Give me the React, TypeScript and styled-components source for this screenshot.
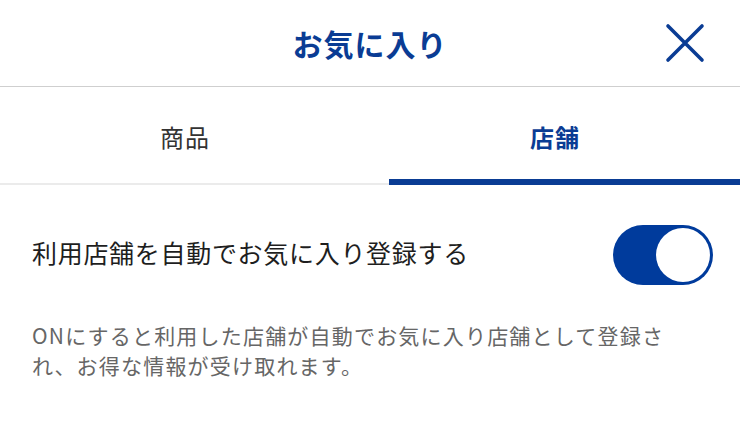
import React, { useState } from "react";
import styled, { createGlobalStyle } from "styled-components";

const blue = "#0a3c94";

const GlobalStyle = createGlobalStyle`
  body {
    margin: 0;
    background: #fff;
    font-family: "Noto Sans CJK JP", "Noto Sans", sans-serif;
  }
`;

const Page = styled.div`
  width: 740px;
  height: 425px;
  overflow: hidden;
  background: #fff;
`;

const Header = styled.header`
  display: grid;
  grid-template-columns: 1fr auto 1fr;
  align-items: center;
  height: 86px;
  border-bottom: 1px solid #cfcfcf;
`;

const Title = styled.h1`
  grid-column: 2;
  margin: 0;
  font-size: 30px;
  font-weight: 700;
  letter-spacing: 1px;
  color: ${blue};
  line-height: 1;
`;

const CloseButton = styled.button`
  grid-column: 3;
  justify-self: end;
  margin-right: 34px;
  padding: 0;
  width: 42px;
  height: 42px;
  border: none;
  background: none;
  display: flex;
  align-items: center;
  justify-content: center;
  cursor: pointer;
`;

const Tabs = styled.nav`
  display: grid;
  grid-template-columns: 389px 1fr;
`;

const Tab = styled.button<{ $active?: boolean }>`
  box-sizing: border-box;
  height: 98px;
  padding: 32px 19px 0 0;
  border: none;
  border-bottom: ${(p) => (p.$active ? `6px solid ${blue}` : "2px solid #ebebeb")};
  background: none;
  font-family: inherit;
  font-size: 24px;
  line-height: 36px;
  letter-spacing: 1px;
  font-weight: ${(p) => (p.$active ? 700 : 400)};
  color: ${(p) => (p.$active ? blue : "#333")};
  display: flex;
  justify-content: center;
  align-items: flex-start;
  cursor: pointer;
`;

const SettingRow = styled.div`
  display: flex;
  align-items: center;
  justify-content: space-between;
  padding: 40px 27px 0 32px;
`;

const SettingLabel = styled.span`
  font-size: 25px;
  letter-spacing: 0.7px;
  color: #1e1e1e;
  line-height: 36px;
  margin-top: -6px;
`;

const Switch = styled.button<{ $on: boolean }>`
  box-sizing: border-box;
  width: 100px;
  height: 60px;
  border-radius: 30px;
  border: none;
  padding: 3px;
  background: ${(p) => (p.$on ? "#003b9c" : "#ccc")};
  display: flex;
  justify-content: ${(p) => (p.$on ? "flex-end" : "flex-start")};
  align-items: center;
  cursor: pointer;
`;

const Knob = styled.span`
  width: 54px;
  height: 54px;
  border-radius: 50%;
  background: #fff;
`;

const Description = styled.p`
  margin: 35px 0 0;
  padding: 0 60px 0 32px;
  font-size: 21px;
  letter-spacing: 1.2px;
  line-height: 30px;
  color: #666;
`;

export default function App() {
  const [tab, setTab] = useState(1);
  const [on, setOn] = useState(true);
  return (
    <Page>
      <GlobalStyle />
      <Header>
        <Title>お気に入り</Title>
        <CloseButton aria-label="閉じる">
          <svg width="40" height="40" viewBox="0 0 40 40">
            <path
              d="M3 3 L37 37 M37 3 L3 37"
              stroke={blue}
              strokeWidth="3.6"
              strokeLinecap="round"
              fill="none"
            />
          </svg>
        </CloseButton>
      </Header>
      <Tabs>
        <Tab $active={tab === 0} onClick={() => setTab(0)}>
          商品
        </Tab>
        <Tab $active={tab === 1} onClick={() => setTab(1)}>
          店舗
        </Tab>
      </Tabs>
      <SettingRow>
        <SettingLabel>利用店舗を自動でお気に入り登録する</SettingLabel>
        <Switch $on={on} onClick={() => setOn(!on)} aria-pressed={on}>
          <Knob />
        </Switch>
      </SettingRow>
      <Description>
        ONにすると利用した店舗が自動でお気に入り店舗として登録され、お得な情報が受け取れます。
      </Description>
    </Page>
  );
}
